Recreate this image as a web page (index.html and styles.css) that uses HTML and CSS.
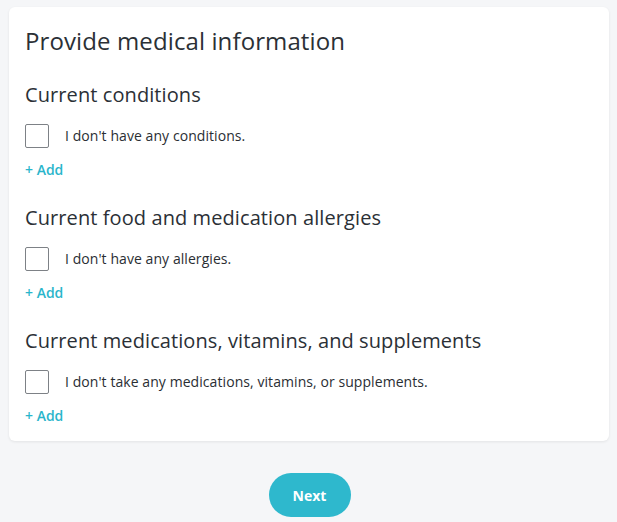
FILE: index.html
```html
<!DOCTYPE html>
<html>
<head>
<meta charset="utf-8">
<link rel="stylesheet" href="styles.css">
</head>
<body>
<div class="page">
  <div class="card">
    <h1 class="title">Provide medical information</h1>
    <div class="section">
      <h2 class="heading">Current conditions</h2>
      <label class="check-row"><span class="box"></span><span class="label">I don't have any conditions.</span></label>
      <a class="add">+ Add</a>
    </div>
    <div class="section">
      <h2 class="heading">Current food and medication allergies</h2>
      <label class="check-row"><span class="box"></span><span class="label">I don't have any allergies.</span></label>
      <a class="add">+ Add</a>
    </div>
    <div class="section">
      <h2 class="heading">Current medications, vitamins, and supplements</h2>
      <label class="check-row"><span class="box"></span><span class="label">I don't take any medications, vitamins, or supplements.</span></label>
      <a class="add">+ Add</a>
    </div>
  </div>
  <div class="actions">
    <button class="next">Next</button>
  </div>
</div>
</body>
</html>
```
FILE: styles.css
```css
html, body {
  margin: 0;
  padding: 0;
  background: #f5f6f8;
  font-family: "Open Sans", "Noto Sans", sans-serif;
  color: #2b3036;
}
.page {
  padding: 7px 8px 0 9px;
}
.card {
  background: #fff;
  border-radius: 6px;
  box-shadow: 0 1px 3px rgba(0,0,0,0.08);
  padding: 18px 16px 15px 16px;
  display: flex;
  flex-direction: column;
}
.title {
  margin: 0;
  font-size: 24px;
  font-weight: 400;
  line-height: 32px;
  letter-spacing: 0.11px;
}
.section {
  display: flex;
  flex-direction: column;
  align-items: flex-start;
  margin-top: 24px;
}
.heading {
  margin: 0;
  font-size: 20px;
  font-weight: 400;
  line-height: 28px;
  letter-spacing: 0.09px;
}
.check-row {
  display: flex;
  align-items: center;
  margin-top: 15px;
}
.box {
  width: 22px;
  height: 22px;
  border: 1px solid #7d8186;
  border-radius: 2px;
  box-sizing: content-box;
}
.label {
  margin-left: 16px;
  font-size: 14px;
  line-height: 20px;
  letter-spacing: 0.07px;
  color: #2a2e33;
}
.add {
  margin-top: 12px;
  font-size: 14px;
  font-weight: 600;
  line-height: 20px;
  color: #2ab5cb;
  cursor: pointer;
}
.actions {
  display: flex;
  justify-content: center;
  margin-top: 32px;
  padding-left: 1px;
}
.next {
  width: 82px;
  height: 44px;
  border: none;
  border-radius: 22px;
  background: #2eb8cd;
  color: #fff;
  font-family: "Open Sans", "Noto Sans", sans-serif;
  font-weight: 700;
  font-size: 14px;
}
```
